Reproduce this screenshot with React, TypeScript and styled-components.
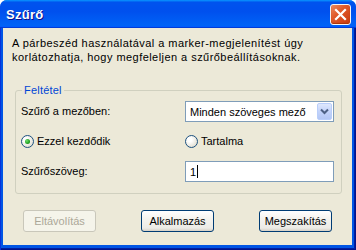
import React from "react";
import styled, { createGlobalStyle } from "styled-components";

const Global = createGlobalStyle`
  html, body { margin: 0; padding: 0; background: #ffffff; }
  body { font-family: "Liberation Sans", Arial, sans-serif; font-size: 11px; color: #000; }
  * { box-sizing: border-box; }
`;

const Window = styled.div`
  width: 356px;
  height: 250px;
  display: flex;
  flex-direction: column;
  border-radius: 7px 7px 0 0;
  overflow: hidden;
  background: #0055e5;
`;

const TitleBar = styled.div`
  height: 28px;
  flex: none;
  display: flex;
  align-items: center;
  justify-content: space-between;
  padding: 0 5px 0 6px;
  background: linear-gradient(
    180deg,
    #0997ff 0%,
    #0053ee 8%,
    #0050ee 40%,
    #0062f6 88%,
    #0062f6 93%,
    #005bff 95%,
    #003dd7 96%,
    #003dd7 100%
  );
`;

const Title = styled.span`
  font-family: "Liberation Sans", Arial, sans-serif;
  font-weight: bold;
  font-size: 13px;
  color: #fff;
  text-shadow: 1px 1px #0f1089;
  letter-spacing: 0.3px;
`;

const CloseButton = styled.div`
  width: 21px;
  height: 21px;
  border: 1px solid #f4f4f4;
  border-radius: 3px;
  display: flex;
  align-items: center;
  justify-content: center;
  background: linear-gradient(135deg, #ec8a60 0%, #e05a2a 40%, #d2461a 75%, #c23c10 100%);
  box-shadow: inset 0 -1px 1px #a8350a;
`;

const Frame = styled.div`
  flex: 1;
  display: flex;
  padding: 0 4px 5px 3px;
  background: #0055e5;
  box-shadow: inset 1px 0 #0831d9, inset -1px 0 #00138c, inset 0 -1px #00138c, inset -2px -2px #001ea0;
`;

const Body = styled.div`
  flex: 1;
  display: flex;
  flex-direction: column;
  background: #ece9d8;
`;

const Intro = styled.p`
  margin: 8px 0 0 9px;
  line-height: 14px;
  font-size: 11px;
  letter-spacing: 0.45px;
  white-space: nowrap;
`;

const Group = styled.div`
  position: relative;
  margin: 26px 10px 0 12px;
  border: 1px solid #d0d0bf;
  border-radius: 3px;
  padding: 10px 6px 11px 5px;
`;

const Legend = styled.span`
  position: absolute;
  top: -8px;
  left: 6px;
  padding: 0 2px;
  background: #ece9d8;
  color: #0046d5;
  line-height: 14px;
  letter-spacing: 0.2px;
`;

const Grid = styled.div`
  display: grid;
  grid-template-columns: 164px 149px;
  grid-template-rows: 21px 13px 21px;
  row-gap: 13px;
  align-items: center;
`;

const Label = styled.span`
  line-height: 13px;
`;

const Combo = styled.div`
  height: 21px;
  border: 1px solid #7f9db9;
  background: #fff;
  display: flex;
  align-items: center;
  justify-content: space-between;
  padding: 1px 1px 1px 4px;
  white-space: nowrap;
`;

const ComboArrow = styled.div`
  width: 15px;
  height: 17px;
  border: 1px solid #b9cefa;
  border-radius: 2px;
  display: flex;
  align-items: center;
  justify-content: center;
  flex: none;
  background: linear-gradient(180deg, #dfe8fd 0%, #c3d3fa 50%, #b3c7f5 100%);
`;

const RadioWrap = styled.label`
  display: flex;
  align-items: center;
  gap: 3px;
  line-height: 13px;
`;

const RadioCircle = styled.span<{ $checked?: boolean }>`
  width: 13px;
  height: 13px;
  border-radius: 50%;
  border: 1px solid #1c5180;
  background: radial-gradient(circle at 35% 35%, #ffffff 20%, #e6e3d8 70%, #cfccc0 100%);
  display: flex;
  align-items: center;
  justify-content: center;
  flex: none;

  &::after {
    content: "";
    display: ${(p) => (p.$checked ? "block" : "none")};
    width: 5px;
    height: 5px;
    border-radius: 50%;
    background: radial-gradient(circle at 35% 35%, #6fe06c 0%, #21a121 60%, #138013 100%);
  }
`;

const TextInput = styled.div`
  height: 21px;
  border: 1px solid #7f9db9;
  background: #fff;
  display: flex;
  align-items: center;
  padding: 0 4px;
`;

const Caret = styled.span`
  display: inline-block;
  width: 1px;
  height: 13px;
  background: #000;
  margin-left: 1px;
`;

const ButtonRow = styled.div`
  display: flex;
  gap: 45px;
  margin: 16px 0 0 20px;
`;

const Button = styled.div<{ $disabled?: boolean }>`
  width: 73px;
  height: 22px;
  border-radius: 3px;
  display: flex;
  align-items: center;
  justify-content: center;
  white-space: nowrap;
  border: 1px solid ${(p) => (p.$disabled ? "#c9c7ba" : "#003c74")};
  color: ${(p) => (p.$disabled ? "#aca899" : "#000")};
  background: ${(p) =>
    p.$disabled
      ? "#f5f4ea"
      : "linear-gradient(180deg, #ffffff 0%, #f4f3ee 40%, #ecebe6 85%, #d6d0c5 100%)"};
`;

export default function App() {
  return (
    <>
      <Global />
      <Window>
        <TitleBar>
          <Title>Szűrő</Title>
          <CloseButton>
            <svg width="13" height="13" viewBox="0 0 13 13">
              <path d="M2 2 L11 11 M11 2 L2 11" stroke="#fff" strokeWidth="2.2" strokeLinecap="square" />
            </svg>
          </CloseButton>
        </TitleBar>
        <Frame>
          <Body>
            <Intro>
              A párbeszéd használatával a marker-megjelenítést úgy
              <br />
              korlátozhatja, hogy megfeleljen a szűrőbeállításoknak.
            </Intro>
            <Group>
              <Legend>Feltétel</Legend>
              <Grid>
                <Label>Szűrő a mezőben:</Label>
                <Combo>
                  <span>Minden szöveges mező</span>
                  <ComboArrow>
                    <svg width="9" height="7" viewBox="0 0 9 7">
                      <path d="M1 1.5 L4.5 5 L8 1.5" stroke="#4d6185" strokeWidth="2" fill="none" />
                    </svg>
                  </ComboArrow>
                </Combo>
                <RadioWrap>
                  <RadioCircle $checked />
                  Ezzel kezdődik
                </RadioWrap>
                <RadioWrap>
                  <RadioCircle />
                  Tartalma
                </RadioWrap>
                <Label>Szűrőszöveg:</Label>
                <TextInput>
                  1<Caret />
                </TextInput>
              </Grid>
            </Group>
            <ButtonRow>
              <Button $disabled>Eltávolítás</Button>
              <Button>Alkalmazás</Button>
              <Button>Megszakítás</Button>
            </ButtonRow>
          </Body>
        </Frame>
      </Window>
    </>
  );
}
